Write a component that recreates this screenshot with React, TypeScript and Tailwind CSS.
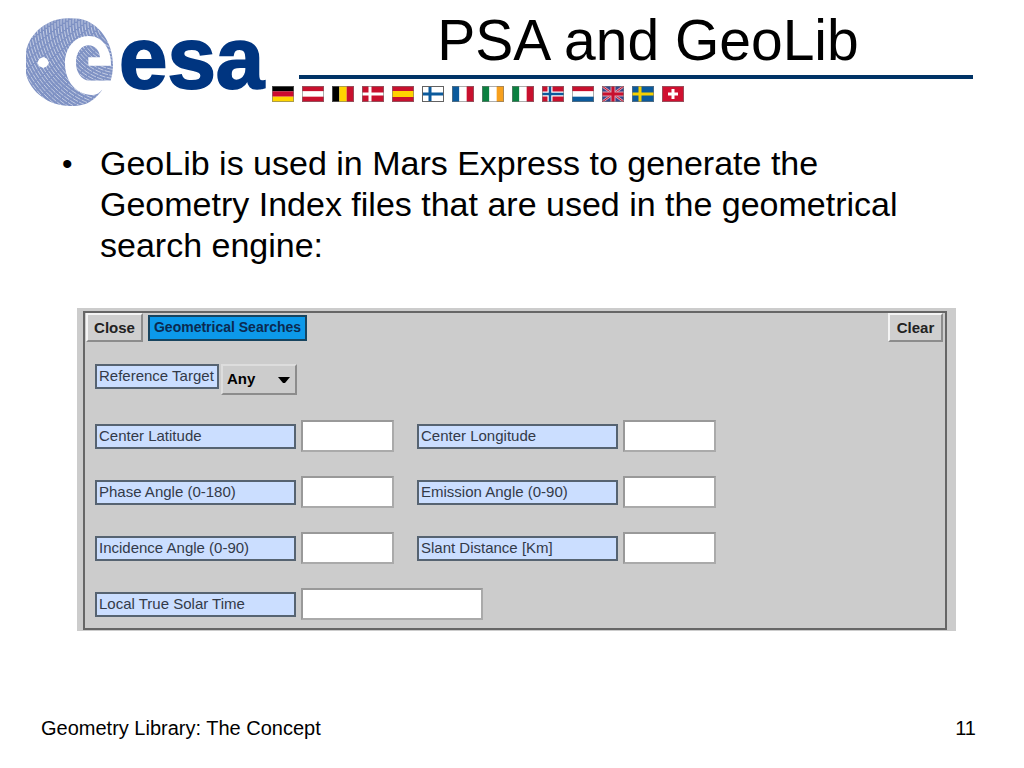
import type { ReactNode } from 'react';
import { clsx } from 'clsx';

const RINGS = Array.from({ length: 34 }, (_, i) => 24 + i * 9);

function EsaLogo() {
  return (
    <svg viewBox="0 -8 250 110" className="w-[250px] h-[110px] shrink-0" role="img" aria-label="ESA">
      <g transform="translate(-6 -1) scale(0.3333)">
        <clipPath id="globe">
          <path d="M18 116 C28 58 88 12 150 16 C170 16 188 18 201 24 C250 46 280 100 279 160 Q278 185 272 203 H200 V222 L247 230 C216 272 190 279 150 279 C86 279 32 238 18 184 Z" />
        </clipPath>
        <g clipPath="url(#globe)">
          <rect x="10" y="10" width="280" height="280" fill="#7f92c4" />
          {RINGS.map((r) => (
            <circle key={r} cx="300" cy="30" r={r} fill="none" stroke="#fff" strokeWidth="3" strokeDasharray="18 4" opacity="0.55" />
          ))}
        </g>
        {/* white "e" orbit cut out of the globe */}
        <path
          fill="#fff"
          d="M206 69 C164 69 135 105 135 151 C135 207 170 246 216 246 C228 246 238 240 247 230 C262 222 276 210 279 203 H208 C184 201 168 178 168 149 C168 119 183 97 206 97 C225 97 239 113 240 133 H205 V158 H273 C275 108 247 69 206 69 Z"
        />
        <path fill="#fff" d="M70 132 L81 137 L87 149 L81 160 L70 165 L58 160 L52 149 L58 137 Z" />
      </g>
      <text x="93" y="74" fontFamily="Liberation Sans, Arial, sans-serif" fontWeight="700" fontSize="87" fill="#003580" stroke="#003580" strokeWidth="2">
        esa
      </text>
    </svg>
  );
}

function Flag({ name, children }: { name: string; children: ReactNode }) {
  return (
    <svg viewBox="0 0 22 16" className="w-[22px] h-4" role="img" aria-label={name}>
      {children}
      <rect x="0.5" y="0.5" width="21" height="15" fill="none" stroke="#777" strokeOpacity="0.6" />
    </svg>
  );
}

function Bands({ colors, vertical }: { colors: string[]; vertical?: boolean }) {
  return (
    <>
      {colors.map((c, i) =>
        vertical ? (
          <rect key={i} x={(i * 22) / 3} width="7.4" height="16" fill={c} />
        ) : (
          <rect key={i} y={(i * 16) / 3} width="22" height="5.4" fill={c} />
        )
      )}
    </>
  );
}

function Cross({ bg, fg, inner }: { bg: string; fg: string; inner?: string }) {
  return (
    <>
      <rect width="22" height="16" fill={bg} />
      <path d="M8 0V16M0 8H22" stroke={fg} strokeWidth={inner ? 5 : 3} />
      {inner && <path d="M8 0V16M0 8H22" stroke={inner} strokeWidth="2.5" />}
    </>
  );
}

function Flags() {
  return (
    <div className="flex gap-2">
      <Flag name="Germany"><Bands colors={['#000', '#cc0a2f', '#ffd500']} /></Flag>
      <Flag name="Austria"><Bands colors={['#c8102e', '#fff', '#c8102e']} /></Flag>
      <Flag name="Belgium"><Bands vertical colors={['#000', '#ffd500', '#c8102e']} /></Flag>
      <Flag name="Denmark"><Cross bg="#c8102e" fg="#fff" /></Flag>
      <Flag name="Spain">
        <rect width="22" height="16" fill="#c8102e" />
        <rect y="5" width="22" height="6" fill="#ffd200" />
      </Flag>
      <Flag name="Finland">
        <Cross bg="#fff" fg="#0b5a9c" />
        <rect x="0.5" y="0.5" width="21" height="15" fill="none" stroke="#444" />
      </Flag>
      <Flag name="France"><Bands vertical colors={['#0b5a9c', '#fff', '#c8102e']} /></Flag>
      <Flag name="Ireland"><Bands vertical colors={['#0b8040', '#fff', '#f7a01d']} /></Flag>
      <Flag name="Italy"><Bands vertical colors={['#0b8040', '#fff', '#c8102e']} /></Flag>
      <Flag name="Norway"><Cross bg="#c8102e" fg="#fff" inner="#0b5a9c" /></Flag>
      <Flag name="Netherlands"><Bands colors={['#c8102e', '#fff', '#0b5a9c']} /></Flag>
      <Flag name="United Kingdom">
        <rect width="22" height="16" fill="#35468c" />
        <path d="M0 0L22 16M22 0L0 16" stroke="#d9a3b4" strokeWidth="2.5" />
        <path d="M0 0L22 16M22 0L0 16" stroke="#c8102e" strokeWidth="1" />
        <path d="M11 0V16M0 8H22" stroke="#d9a3b4" strokeWidth="5" />
        <path d="M11 0V16M0 8H22" stroke="#c8102e" strokeWidth="3" />
      </Flag>
      <Flag name="Sweden"><Cross bg="#0b5a9c" fg="#f5d000" /></Flag>
      <Flag name="Switzerland">
        <rect width="22" height="16" fill="#d01030" />
        <path d="M11 3V13M6 8H16" stroke="#fff" strokeWidth="3" />
      </Flag>
    </div>
  );
}

const labelStyle = 'border-2 border-[#566371] bg-[#cbdeff] px-[2px] text-[#333a48] text-[15px] leading-[19px] whitespace-nowrap';
const buttonStyle = 'h-[29px] border-2 border-t-[#f4f4f4] border-l-[#f4f4f4] border-b-[#8c8c8c] border-r-[#8c8c8c] bg-[#cfcfcf] text-[#222] text-[15px] leading-5 font-bold';

function Field({ id, label, wide }: { id: string; label: string; wide?: boolean }) {
  return (
    <div className="flex items-center gap-[5px]">
      <label htmlFor={id} className={clsx(labelStyle, 'w-[201px] h-[25px]')}>{label}</label>
      <input
        id={id}
        type="text"
        className={clsx(
          'h-8 px-1 bg-white border-2 border-t-[#999] border-l-[#999] border-b-[#aaa] border-r-[#aaa] text-[15px]',
          wide ? 'w-[182px]' : 'w-[93px]'
        )}
      />
    </div>
  );
}

function SearchForm() {
  return (
    <form className="ml-[77px] mr-[68px] mt-[42px] bg-[#ccc] pt-[3px] pb-px pl-[6px] pr-[9px]" onSubmit={(e) => e.preventDefault()}>
      <div className="border-2 border-[#666] pb-2">
        <div className="flex items-center pl-px pr-[2px]">
          <button type="button" className={clsx(buttonStyle, 'w-[57px]')}>Close</button>
          <h2 className="ml-[5px] h-[26px] w-[159px] border-2 border-[#17445f] bg-[#0c99ea] text-center text-[#0b2a50] text-[14px] leading-[21px] font-bold whitespace-nowrap">
            Geometrical Searches
          </h2>
          <button type="reset" className={clsx(buttonStyle, 'ml-auto w-[55px]')}>Clear</button>
        </div>

        <div className="mt-[22px] ml-[10px] flex gap-[2px]">
          <label htmlFor="target" className={clsx(labelStyle, 'w-[124px] h-[25px]')}>Reference Target</label>
          <div className="relative">
            <select
              id="target"
              className="appearance-none w-[76px] h-[31px] pl-1 border-2 border-t-[#ddd] border-l-[#ddd] border-b-[#8c8c8c] border-r-[#8c8c8c] bg-[#ccc] text-black text-[15px] font-bold"
            >
              <option>Any</option>
            </select>
            <svg viewBox="0 0 14 8" className="absolute right-[6px] top-3 w-[14px] h-2 pointer-events-none">
              <path d="M1 1H13L8 7H6Z" fill="#000" />
            </svg>
          </div>
        </div>

        <div className="mt-[25px] ml-[10px] grid grid-cols-[max-content_max-content] gap-x-[23px] gap-y-6">
          <Field id="latitude" label="Center Latitude" />
          <Field id="longitude" label="Center Longitude" />
          <Field id="phase" label="Phase Angle (0-180)" />
          <Field id="emission" label="Emission Angle (0-90)" />
          <Field id="incidence" label="Incidence Angle (0-90)" />
          <Field id="slant" label="Slant Distance [Km]" />
          <div className="col-span-2">
            <Field id="solar" label="Local True Solar Time" wide />
          </div>
        </div>
      </div>
    </form>
  );
}

export default function App() {
  return (
    <div className="min-h-screen flex flex-col bg-white text-black font-['Liberation_Sans',Arial,sans-serif]">
      <header className="flex pl-[26px]">
        <div className="pt-[6px] w-[246px]">
          <EsaLogo />
        </div>
        <div className="flex-1">
          <h1 className="pt-[7px] h-[75px] text-center text-[57px] leading-[66px] whitespace-nowrap">PSA and GeoLib</h1>
          <div className="ml-[27px] mr-[51px] h-1 bg-[#003366]" />
          <div className="mt-[7px]">
            <Flags />
          </div>
        </div>
      </header>

      <main>
        <ul className="mt-[27px] pl-[62px] pr-[68px] text-[34px] leading-[41px]">
          <li className="flex">
            <span className="w-[38px] shrink-0 text-[30px]">•</span>
            <span>
              GeoLib is used in Mars Express to generate the Geometry Index files that are used in the geometrical search engine:
            </span>
          </li>
        </ul>
        <SearchForm />
      </main>

      <footer className="mt-auto flex justify-between pl-[41px] pr-12 pb-7 text-[20px] leading-6">
        <span>Geometry Library: The Concept</span>
        <span>11</span>
      </footer>
    </div>
  );
}
